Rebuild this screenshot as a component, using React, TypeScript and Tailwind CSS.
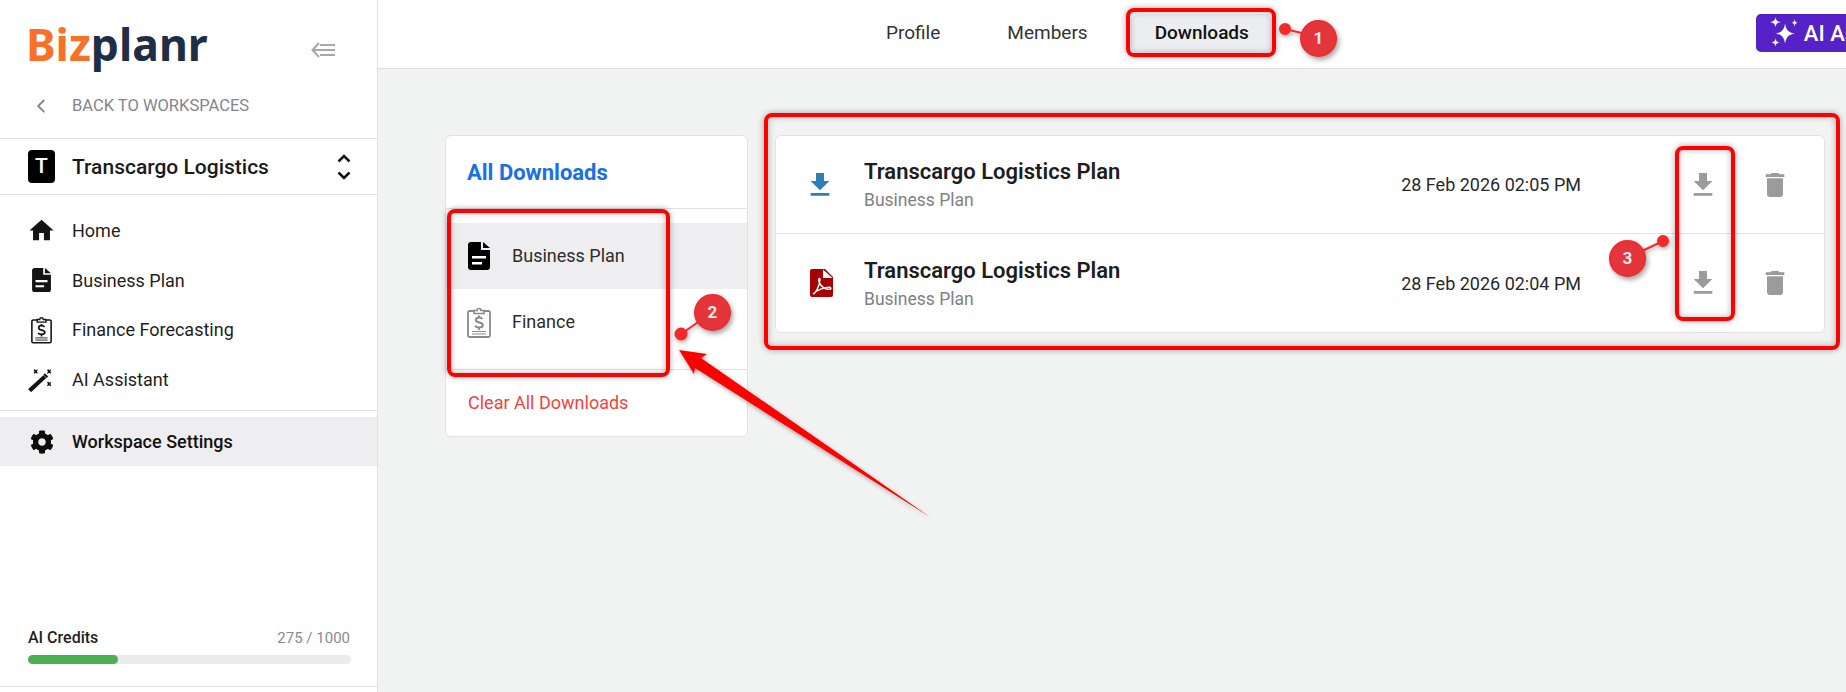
import { ChevronLeft } from "lucide-react";
import { FaCog } from "react-icons/fa";
import { MdDelete, MdFileDownload, MdHome } from "react-icons/md";

function DocIcon({ className }: { className: string }) {
  return (
    <svg viewBox="0 0 22 28" className={className} fill="currentColor">
      <path d="M3 0h10v8h9v17a3 3 0 0 1-3 3H3a3 3 0 0 1-3-3V3a3 3 0 0 1 3-3z" />
      <path d="M15 0l7 6h-7z" />
      <path d="M4 14h14v2.500H4zM4 20h10v2.500H4z" fill="#fff" />
    </svg>
  );
}

function ClipboardIcon({ className }: { className: string }) {
  return (
    <svg viewBox="0 0 24 32" className={className} fill="none" stroke="currentColor">
      <path d="M7 4.500H2.500a1.500 1.500 0 0 0-1.500 1.500v23a1.500 1.500 0 0 0 1.500 1.500h19a1.500 1.500 0 0 0 1.500-1.500V6a1.500 1.500 0 0 0-1.500-1.500H17" strokeWidth="1.800" />
      <path d="M7 7V4h3a2 2 0 0 1 4 0h3v3z" strokeWidth="1.600" />
      <path d="M5 25h14M5 27.500h14" strokeWidth="1" />
      <path d="M15.500 12.500c-.8-1-2-1.400-3.500-1.400-1.900 0-3.200 1-3.200 2.500 0 3.400 7 1.600 7 4.900 0 1.600-1.500 2.500-3.800 2.500-1.700 0-3-.5-3.900-1.600M12 9v2M12 21.500v2" strokeWidth="2" />
    </svg>
  );
}

function WandIcon({ className }: { className: string }) {
  return (
    <svg viewBox="0 0 26 26" className={className} fill="currentColor">
      <path d="M16 8.500l3 3L4 25.500a1 1 0 0 1-1.500 0L.800 23.800a1 1 0 0 1 0-1.500z" />
      <path d="M17.500 6.500l3.500 3.500-1.500 1.500-3.500-3.500z" />
      <path d="M7 2l1 1.500 1.500-1 .7.7-1 1.500 1 1.500-.7.7-1.500-1-1.500 1-.7-.7 1-1.500-1-1.500.7-.7z" />
      <path d="M21 2l1 1.500 1.500-1 .7.7-1 1.500 1 1.500-.7.7-1.500-1-1.500 1-.7-.7 1-1.500-1-1.500.7-.7z" />
      <path d="M21 15l1 1.500 1.500-1 .7.7-1 1.500 1 1.500-.7.7-1.500-1-1.500 1-.7-.7 1-1.500-1-1.500.7-.7z" />
    </svg>
  );
}

function PdfIcon() {
  return (
    <svg viewBox="0 0 23 28" className="ml-[2px] h-[28px] w-[23px]">
      <path d="M2 0h13l8 8v18a2 2 0 0 1-2 2H2a2 2 0 0 1-2-2V2a2 2 0 0 1 2-2z" fill="#a80000" />
      <path d="M13 .500l9.500 8.500H13z" fill="#fff" />
      <path d="M3 25c3-1 6.500-8 7-14 .2-2-1.500-2-1.300.3.500 5 6 9.500 11 9 1.800-.2 1.500-2-.5-2-5 0-12 3-16.200 6.700z" fill="none" stroke="#fff" strokeWidth="1.400" />
    </svg>
  );
}

function Sparkles() {
  return (
    <svg viewBox="0 0 28 32" className="h-[34px] w-[30px]" fill="#fff">
      <path d="M15 7c1 6 3 8.500 9 9.500-6 1-8 3.500-9 9.500-1-6-3-8.500-9-9.500 6-1 8-3.500 9-9.500z" />
      <path d="M6 1c.5 3.200 1.500 4.200 5 4.800C7.500 6.400 6.500 7.400 6 10.600 5.500 7.400 4.500 6.400 1 5.800 4.500 5.200 5.500 4.200 6 1z" />
      <path d="M24 3c.4 2.200 1 3 3 3.400-2 .4-2.600 1.200-3 3.400-.4-2.200-1-3-3-3.400 2-.4 2.600-1.200 3-3.400z" />
      <path d="M6 21c.4 2.600 1.200 3.500 3.800 3.900-2.600.4-3.400 1.300-3.800 3.900-.4-2.600-1.200-3.500-3.800-3.900 2.600-.4 3.400-1.300 3.800-3.900z" />
    </svg>
  );
}

function Sidebar() {
  return (
    <aside className="flex h-full w-[378px] shrink-0 flex-col border-r border-[#e0e0e0] bg-white">
      <div className="h-[139px] shrink-0 border-b border-[#e0e0e0]">
        <div className="flex h-[72px] items-end justify-between pl-[26px] pr-[42px]">
          <div className="font-['Noto_Sans'] text-[44.500px] leading-[56px] font-bold">
            <span className="text-[#f97028]">Biz</span>
            <span className="text-[#1f2e47]">planr</span>
          </div>
          <svg viewBox="0 0 24 16" className="mb-[14px] h-[16px] w-[24px]" fill="none" stroke="#a8a8a8" strokeWidth="2">
            <path d="M8 1L1.500 8 8 15M2 8h22M9 3h15M9 13h15" />
          </svg>
        </div>
        <div className="mt-[21px] flex items-center pl-[30px] font-['Roboto'] text-[16.500px] leading-[26px] text-[#85858c]">
          <ChevronLeft className="h-[22px] w-[22px]" strokeWidth={2} />
          <span className="ml-[20px]">BACK TO WORKSPACES</span>
        </div>
      </div>

      <div className="flex h-[56px] shrink-0 items-center border-b border-[#e0e0e0] pl-[28px] pr-[26px]">
        <div className="flex h-[33px] w-[27px] items-center justify-center rounded-[4px] bg-black font-['Roboto'] text-[21px] font-medium text-white">T</div>
        <span className="ml-[17px] pt-[2px] font-['Roboto'] text-[21px] font-medium text-[#1a1a1a]">Transcargo Logistics</span>
        <svg viewBox="0 0 14 26" className="ml-auto h-[26px] w-[14px]" fill="none" stroke="#111" strokeWidth="2.500">
          <path d="M1.500 7.500L7 2l5.500 5.500M1.500 18.500L7 24l5.500-5.500" />
        </svg>
      </div>

      <nav className="flex flex-col pt-[11px] font-['Roboto'] text-[18px] text-[#1f1f1f]">
        <div className="flex h-[49.500px] items-center pl-[27px]">
          <MdHome className="h-[29px] w-[29px] text-[#141414]" />
          <span className="ml-[16px]">Home</span>
        </div>
        <div className="flex h-[49.500px] items-center pl-[32px]">
          <DocIcon className="h-[24px] w-[19px] text-[#141414]" />
          <span className="ml-[21px]">Business Plan</span>
        </div>
        <div className="flex h-[49.500px] items-center pl-[31px]">
          <ClipboardIcon className="h-[28px] w-[21px] text-[#141414]" />
          <span className="ml-[20px]">Finance Forecasting</span>
        </div>
        <div className="flex h-[49.500px] items-center pl-[28px]">
          <WandIcon className="h-[25px] w-[25px] text-[#141414]" />
          <span className="ml-[19px]">AI Assistant</span>
        </div>
      </nav>
      <div className="mt-[6px] border-t border-[#e0e0e0] pt-[6px]">
        <div className="flex h-[49px] items-center bg-[#eeeef0] pl-[30px] font-['Roboto'] text-[18px] font-medium text-[#111]">
          <FaCog className="h-[24px] w-[24px] text-[#0c0c0c]" />
          <span className="ml-[18px]">Workspace Settings</span>
        </div>
      </div>

      <div className="mt-auto border-b border-[#e0e0e0] pr-[26px] pl-[28px] pb-[22px]">
        <div className="flex items-center justify-between font-['Roboto'] leading-[20px]">
          <span className="text-[16px] font-medium text-[#1f1f1f]">AI Credits</span>
          <span className="pr-[1px] text-[15px] text-[#8a8a90]">275 / 1000</span>
        </div>
        <div className="mt-[7px] h-[9px] w-full rounded-full bg-[#ebebeb]">
          <div className="h-full rounded-full bg-[#4caf50]" style={{ width: "28%" }} />
        </div>
      </div>
      <div className="h-[5px] shrink-0" />
    </aside>
  );
}

function Header() {
  return (
    <header className="flex h-[69px] shrink-0 items-center overflow-hidden border-b border-[#e0e0e0] bg-white pb-[2px] font-['Roboto'] text-[19px]">
      <div className="ml-[484px] flex shrink-0 items-center gap-[19px] text-[#333]">
        <div className="px-6">Profile</div>
        <div className="px-6">Members</div>
        <div className="flex h-[39px] items-center rounded-lg bg-[#ecedf0] px-6 font-medium text-[#111]">Downloads</div>
      </div>
      <button className="ml-[483px] flex h-[38px] w-[180px] shrink-0 items-center gap-[5px] rounded-[5px] bg-[#5621c7] pl-[13px] text-[22px] font-medium text-white">
        <Sparkles />
        <span>AI Assistant</span>
      </button>
    </header>
  );
}

function DownloadRow({ date, icon, last }: { date: string; icon: React.ReactNode; last?: boolean }) {
  return (
    <div className={`flex h-[98px] items-center ${last ? "" : "border-b border-[#e2e2e2]"}`}>
      <div className="flex w-[88px] justify-center">{icon}</div>
      <div className="flex flex-col pt-[4px]">
        <span className="font-['Roboto'] text-[22px] leading-[28px] font-semibold text-[#1d1d1f]">Transcargo Logistics Plan</span>
        <span className="font-['Roboto'] text-[17.500px] leading-[29px] text-[#7f7f86]">Business Plan</span>
      </div>
      <span className="ml-auto font-['Roboto'] text-[18px] text-[#28282b]">{date}</span>
      <MdFileDownload className="ml-[106px] h-[32px] w-[32px] text-[#9b9b9b]" />
      <MdDelete className="ml-[40px] mr-[33px] h-[32px] w-[32px] text-[#9b9b9b]" />
    </div>
  );
}

function Callout({ n, className }: { n: number; className: string }) {
  return (
    <div className={`absolute flex h-[37px] w-[37px] items-center justify-center rounded-full border-2 border-[#f42a2a] bg-[#e2363c] font-['Roboto'] text-[17px] font-bold text-[#fdeaea] shadow-[2px_3px_5px_rgba(0,0,0,0.35)] ${className}`}>
      {n}
    </div>
  );
}

export default function App() {
  return (
    <div className="relative flex h-[692px] w-[1846px] overflow-hidden bg-[#f1f3f3]">
      <Sidebar />
      <div className="flex min-w-0 flex-1 flex-col">
        <Header />
        <main className="flex items-start gap-[27px] pt-[66px] pl-[67px] pr-[21px]">
          <div className="flex h-[302px] w-[303px] shrink-0 flex-col rounded-md border border-[#e2e2e2] bg-white font-['Roboto']">
            <div className="flex h-[73px] shrink-0 items-center border-b border-[#e2e2e2] pl-[21px] text-[22px] font-bold text-[#1a6fe8]">All Downloads</div>
            <div className="h-[161px] shrink-0 border-b border-[#e2e2e2] pt-[14px] text-[18px] text-[#2d2d2d]">
              <div className="flex h-[66px] items-center bg-[#eeeef0] pl-[22px]">
                <DocIcon className="h-[28px] w-[22px] text-black" />
                <span className="ml-[22px] pb-[2px]">Business Plan</span>
              </div>
              <div className="flex h-[66px] items-center pl-[21px]">
                <ClipboardIcon className="h-[33px] w-[24px] text-[#8b8b8b]" />
                <span className="ml-[21px] pb-[2px]">Finance</span>
              </div>
            </div>
            <div className="flex flex-1 items-center pb-[2px] pl-[22px] text-[18px] text-[#f4433c]">Clear All Downloads</div>
          </div>

          <div className="min-w-0 flex-1 rounded-md border border-[#e2e2e2] bg-white">
            <DownloadRow date="28 Feb 2026 02:05 PM" icon={<MdFileDownload className="h-[32px] w-[32px] text-[#2d7fb8]" />} />
            <DownloadRow date="28 Feb 2026 02:04 PM" icon={<PdfIcon />} last />
          </div>
        </main>
      </div>

      {/* screenshot annotations */}
      <div className="absolute top-[8px] left-[1126px] h-[49px] w-[150px] rounded-lg border-4 border-[#ff0000] shadow-[0_0_6px_rgba(0,0,0,0.35),inset_0_0_6px_rgba(0,0,0,0.3)]" />
      <div className="absolute top-[209px] left-[447px] h-[168px] w-[223px] rounded-lg border-4 border-[#ff0000] shadow-[0_0_6px_rgba(0,0,0,0.35),inset_0_0_6px_rgba(0,0,0,0.3)]" />
      <div className="absolute top-[113px] left-[764px] h-[237px] w-[1076px] rounded-lg border-4 border-[#ff0000] shadow-[0_0_6px_rgba(0,0,0,0.35),inset_0_0_6px_rgba(0,0,0,0.3)]" />
      <div className="absolute top-[146px] left-[1675px] h-[175px] w-[60px] rounded-lg border-4 border-[#ff0000] shadow-[0_0_6px_rgba(0,0,0,0.35),inset_0_0_6px_rgba(0,0,0,0.3)]" />

      <svg className="pointer-events-none absolute top-0 left-0 h-[692px] w-[1846px]" viewBox="0 0 1846 692">
        <defs>
          <filter id="arrowShadow" x="-20%" y="-20%" width="140%" height="140%">
            <feDropShadow dx="1" dy="2" stdDeviation="2" floodOpacity="0.35" />
          </filter>
        </defs>
        <path d="M679 350L707 354 701 358 930 517 695 368 694 374z" fill="#ff0000" filter="url(#arrowShadow)" />
        <g fill="#f42a2a" stroke="#f42a2a" strokeWidth="2" filter="url(#arrowShadow)">
          <circle cx="1285" cy="29" r="5" />
          <path d="M1285 29L1310 35" fill="none" />
          <circle cx="681" cy="334" r="5.500" />
          <path d="M681 334L704 318" fill="none" />
          <circle cx="1663" cy="241" r="5" />
          <path d="M1663 241L1640 252" fill="none" />
        </g>
      </svg>
      <Callout n={1} className="top-[20px] left-[1300px]" />
      <Callout n={2} className="top-[294px] left-[694px]" />
      <Callout n={3} className="top-[240px] left-[1609px]" />
    </div>
  );
}
